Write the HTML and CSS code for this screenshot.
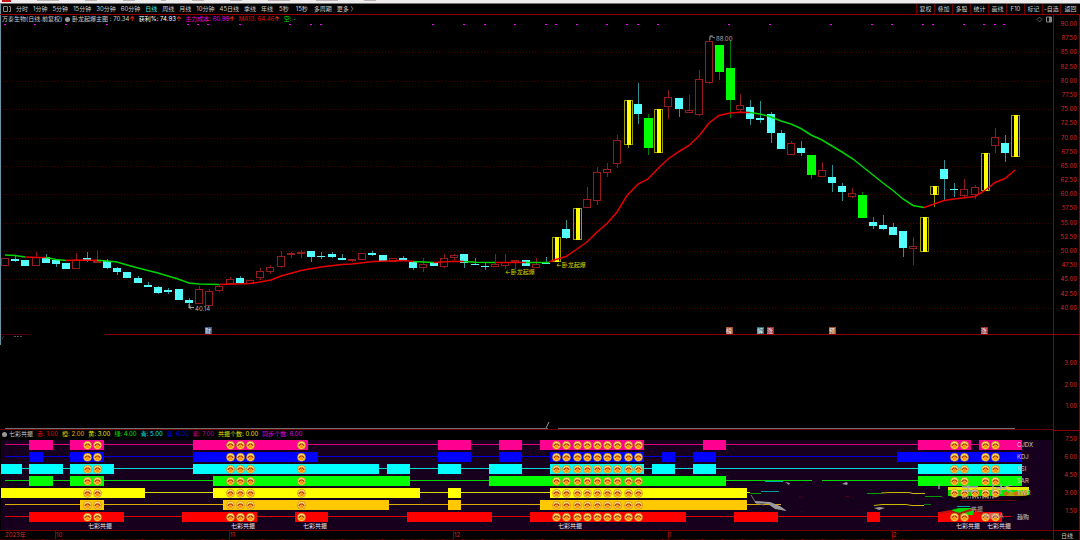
FILE: index.html
```html
<!DOCTYPE html>
<html lang="zh-CN">
<head>
<meta charset="utf-8">
<title>万泰生物 日线</title>
<link rel="stylesheet" href="styles.css">
</head>
<body>
<div class="titlebar"><span class="brand"></span><span class="crumb wide"></span><span class="crumb"></span><span class="crumb"></span><span class="crumb thin"></span><span class="crumb"></span><span class="crumb"></span><span class="crumb wide"></span><span class="crumb wide"></span><span class="crumb"></span></div>
<nav class="toolbar">
  <div class="periods">
    <button class="layout" aria-label="布局"><svg viewBox="0 0 8 6"><path d="M.5.5h4v5h-4zM6 .5h1.5v5H6" fill="none" stroke="#888"/></svg></button>
    <button>分时</button><button>1分钟</button><button>5分钟</button><button>15分钟</button><button>30分钟</button><button>60分钟</button><button class="active">日线</button><button>周线</button><button>月线</button><button>10分钟</button><button>45日线</button><button>季线</button><button>年线</button><button class="sec">5秒</button><button class="sec">15秒</button><button>多周期</button><button>更多 〉</button>
  </div>
  <div class="tools">
    <button>复权</button><button>叠加</button><button>多股</button><button>统计</button><button>画线</button><button>F10</button><button>标记</button><button>-自选</button><button>返回</button>
  </div>
</nav>
<main>
  <section class="panel">
    <div class="plot">
      <header class="info">
        <span class="name">万泰生物(日线.前复权)</span><i class="dot"></i><span class="name">卧龙起爆主图 : 70.34<b>↑</b></span>
        <span class="white gap">获利%: 74.93<b>↑</b></span><span class="magenta gap">主力成本: 60.99<b>↑</b></span><span class="red gap">MA13: 64.46<b>↑</b></span><span class="green gap">空: -</span>
        <span class="corner"><svg viewBox="0 0 16 7"><path d="M3.500 1 6 3.500 3.500 6 1 3.500z" fill="none" stroke="#777" stroke-width=".7"/><path d="M10.500 1h5v5h-5z" fill="none" stroke="#888"/><path d="M13 1h2.500v5H13z" fill="#888"/></svg></span>
      </header>
      <svg id="price" viewBox="0 23 1053 311" role="img" aria-label="K线图"></svg>
    </div>
    <div class="scale price-scale"><span>90.00</span><span>87.50</span><span>85.00</span><span>82.50</span><span>80.00</span><span>77.50</span><span>75.00</span><span>72.50</span><span>70.00</span><span>67.50</span><span>65.00</span><span>62.50</span><span>60.00</span><span>57.50</span><span>55.00</span><span>52.50</span><span>50.00</span><span>47.50</span><span>45.00</span><span>42.50</span><span>40.00</span></div>
  </section>
  <section class="panel">
    <div class="plot"><svg id="signal" viewBox="0 334 1053 96" role="img" aria-label="信号"></svg></div>
    <div class="scale signal-scale"><span>3.00</span><span>2.00</span><span>1.00</span></div>
  </section>
  <section class="panel">
    <div class="plot">
      <header class="info seven">
        <i class="dot"></i><span class="name">七彩共振</span><span class="red">赤: 1.00</span><span class="orange">橙: 2.00</span><span class="yellow">黄: 3.00</span><span class="green">绿: 4.00</span><span class="cyan">青: 5.00</span><span class="blue">蓝: 6.00</span><span class="purple">紫: 7.00</span><span class="yellow">共振个数: 0.00</span><span class="magenta">同步个数: 6.00</span>
      </header>
      <svg id="bands" viewBox="0 438 1053 92" role="img" aria-label="七彩共振"></svg>
    </div>
    <div class="scale bands-scale"><span>7.50</span><span>6.00</span><span>4.50</span><span>3.00</span><span>1.50</span></div>
  </section>
  <section class="panel dates">
    <div class="plot"><svg id="dates" viewBox="0 530 1053 10" role="img" aria-label="日期"></svg></div>
    <div class="scale period">日线</div>
  </section>
</main>
<script src="chart.js"></script>
</body>
</html>
```
FILE: styles.css
```css
* { box-sizing: border-box; }
body {
  margin: 0;
  background: linear-gradient(#6795a6, #6795a6) 0 4px / 1px 341px no-repeat #000;
  color: #ccc;
  font: 6px/8px Inter, "Noto Sans CJK SC", sans-serif;
}
button {
  border: 0;
  padding: 0;
  background: none;
  color: inherit;
  font: inherit;
  white-space: nowrap;
}
svg { display: block; width: 100%; }
.titlebar {
  display: flex;
  gap: 26px;
  height: 4px;
  padding-left: 2px;
  background: #eeecec;
  border-bottom: 1px solid #777;
}
.brand { width: 9px; height: 2px; background: #c41418; }
.crumb { width: 12px; height: 1px; background: #bbb4b4; }
.crumb.wide { width: 22px; }
.crumb.thin { width: 5px; }
.toolbar {
  display: flex;
  justify-content: space-between;
  height: 11px;
  padding-left: 3px;
  border-bottom: 1px solid #8c0000;
}
.periods { display: flex; gap: 5px; align-items: center; }
.layout { width: 8px; }
.active { color: #4fe3e3; }
.sec { padding: 0 1px; }
.tools { display: flex; }
.tools button { width: 18px; border-left: 1px solid #6e0000; }
.tools button:last-child { width: 20px; }
.panel { display: grid; grid-template-columns: 1fr 27px; }
.plot { min-width: 0; }
.info {
  display: flex;
  align-items: center;
  height: 8px;
  padding-left: 2px;
  white-space: nowrap;
}
.info b { color: #f03020; font-weight: 700; }
.dot { width: 5px; height: 5px; margin: 0 2px 0 3px; border-radius: 50%; background: #999; }
.gap { margin-left: 4px; }
.corner { width: 16px; margin-left: auto; margin-right: 1px; }
.seven { gap: 4px; }
.seven .dot { margin: 0 -2px 0 0; }
.name { color: #ccc; }
.white { color: #fff; }
.red { color: #e01010; }
.orange { color: #e8b800; }
.yellow { color: #e8e800; }
.green { color: #00e000; }
.cyan { color: #00e8e8; }
.blue { color: #0000f0; }
.purple { color: #d00080; }
.magenta { color: #e000e0; }
.scale {
  display: flex;
  flex-direction: column;
  justify-content: space-between;
  align-items: flex-end;
  padding-right: 3px;
  border-left: 1px solid #8c0000;
  box-shadow: inset -1px 0 #8c0000;
  color: #d82828;
}
.scale span { padding-left: 6px; }
.price-scale { padding-top: 5px; padding-bottom: 22px; }
.signal-scale { padding-top: 24px; padding-bottom: 20px; border-top: 1px solid #8c0000; }
.bands-scale { padding-top: 4px; padding-bottom: 15px; border-top: 1px solid #8c0000; }
.period { align-items: center; justify-content: center; padding: 0; color: #ccc; border-top: 1px solid #8c0000; }
svg text { font-family: Inter, "Noto Sans CJK SC", sans-serif; font-size: 6px; }
```
FILE: chart.js
```js
const NS = 'http://www.w3.org/2000/svg';
function add(svg, tag, attrs, text) {
  const node = document.createElementNS(NS, tag);
  for (const key in attrs) node.setAttribute(key, attrs[key]);
  if (text) node.textContent = text;
  svg.appendChild(node);
  return node;
}
const line = (s, x1, y1, x2, y2, stroke, w = 1) => add(s, 'path', { d: `M${x1} ${y1}L${x2} ${y2}`, stroke, 'stroke-width': w, fill: 'none' });
const rect = (s, x, y, width, height, fill) => add(s, 'rect', { x, y, width, height, fill });
const label = (s, x, y, fill, text) => add(s, 'text', { x, y, fill }, text);
const slot = i => Math.round(5 + i * 10.207);

const price = document.getElementById('price');
for (const y of [52, 81, 109, 138, 166, 194, 223, 251, 279, 308]) {
  add(price, 'path', { d: `M1 ${y + .5}H1053`, stroke: '#4a0000', 'stroke-dasharray': '1 2' });
}
for (const x of [5, 35, 66, 107, 188, 198, 208, 240, 290, 311, 321, 433, 464, 485, 515, 546, 556, 577, 607, 627, 638, 658, 729, 770, 831, 872, 892, 923, 933, 964, 984, 995, 1004]) {
  rect(price, x - 1, 24, 2, 1, '#f0f');
}

/* kind, body top, body bottom, high, low */
const candles = [
  ['r',258,266],['c',259,261,256,262],['c',260,266],['r',257,266,252],['c',257,263,254],['c',260,264,260,267],['c',263,269],['r',260,269,253],['c',258,260,252,262],['r',261,263,250],
  ['c',261,268,259,269],['c',268,272,267,275],['c',272,278],['c',278,283,276],['c',285,287,282],['c',287,293,286,294],['c',290,292,288,294],['c',289,300],['c',300,303,298,308],['r',289,304,286],
  ['r',291,306,289],['r',286,291,284,292],['r',279,284,277],['c',278,283,276],['r',280,284],['r',271,278,268,280],['r',267,272,265,274],['r',256,267,251,268],['r',253,255,252,258],['r',252,254,250,258],
  ['c',251,257,251,262],['c',256,257,252,259],['c',254,257,252,258],['c',258,260,254],['r',259,261,259,262],['r',253,260],['c',253,255,251,256],['c',255,261],['r',258,262],['c',258,260,256],
  ['c',262,268,262,270],['r',264,268,258,272],['c',262,266],['r',258,267,254,268],['r',255,258,254,260],['c',254,263,254,268],['c',264,265,258],['c',266,267,263,270],['r',264,267,254],['r',262,266,254,269],
  ['r',260,262,260,269],['c',260,266],['r',264,268,258],['c',263,264,257],['y',237,262],['c',229,238,220,239],['y',208,240],['r',199,208,187],['r',172,201,167,205],['r',169,173,163,177],
  ['r',140,164,135,168],['y',100,145,100,148],['c',104,114,83,124],['g',118,148,114,155],['y',109,153],['r',97,107,90,119],['c',98,109,98,117],['r',110,113,95],['r',79,115,70,116],['r',41,83,37,84],
  ['g',45,72,45,80],['g',68,100,41,118],['r',105,110,94,113],['c',107,119,100,125],['c',118,120,101,123],['c',114,133,112,143],['c',133,149,130],['r',143,155,141],['c',148,153,141,156],['g',155,175,155,179],
  ['r',170,177,162],['c',177,183,165,192],['c',186,192,183,201],['r',193,197,188,198],['g',195,218,192],['c',222,226,217,229],['c',225,229,215,230],['c',227,235,223],['c',231,248,231,257],['r',246,249,237,265],
  ['y',217,252],['y',186,195,186,207],['c',169,179,160,200],['c',189,190,183,197],['r',189,196,179,197],['r',187,195,185,199],['y',153,191],['r',137,146,128,153],['c',143,153,135,162],['y',115,157]
];
const wick = { r: '#8c1c1c', c: '#2f8f92', g: '#007c00', y: '#8f8f00' };
candles.forEach(([kind, top, bottom, high = top, low = bottom], i) => {
  const x = slot(i), h = bottom - top;
  if (high < top) rect(price, x, high, 1, top - high, wick[kind]);
  if (low > bottom) rect(price, x, bottom, 1, low - bottom, wick[kind]);
  if (kind === 'c') rect(price, x - 4, top, 8, h, '#54ffff');
  if (kind === 'g') rect(price, x - 4, top, 9, h, '#0f0');
  if (kind === 'r' || kind === 'y') {
    add(price, 'rect', { x: x - 3.5, y: top + .5, width: kind === 'y' ? 8 : 7, height: Math.max(h - 1, 1), fill: 'none', stroke: kind === 'y' ? '#9c9c00' : '#941c1c' });
  }
  if (kind === 'y') rect(price, x - 1, top, 4, h, '#ff0');
});
const average = [
  ['g','5,255 15,255.5 25,257'],['r','25,257 36,257.5 46,257.5'],['g','46,257.5 56,259.5 66,260.5'],['r','66,260.5 77,260 97,260.3'],
  ['g','97,260.3 107,261 117,262 127,265 138,268 158,273 178,279 189,283 199,284 219,284.5'],
  ['r','219,284.5 250,283.5 260,282 271,280 281,276 301,270.5 321,267 342,264.5 352,264 373,261.5 403,260.5 413,261.5'],
  ['g','413,261.5 434,262.5'],['r','434,262.5 454,261.3 464,261.5'],['g','464,261.5 475,262.3 495,262.5'],['r','495,262.5 526,262.5'],['g','526,262.5 549,262.5'],
  ['r','549,262 556,259.5 566,256.5 577,249 587,242 597,232 607,223.5 617,212 627,195.5 638,184 648,179 658,168.5 668,159 679,151.5 689,145.5 699,136 709,123 719,115.5 730,113 740,112.3 750,112.5'],
  ['g','750,112.5 760,114 770,116.5 781,121 791,124 801,128.5 811,135 822,140 842,152 853,159 883,183 893,190.5 903,199 913,205.5 924,207.5'],
  ['r','924,207.5 934,204 944,200.5 954,199 975,196.5 985,190.5 995,182.5 1005,178.5 1015,170']
];
for (const [kind, points] of average) {
  add(price, 'polyline', { points, fill: 'none', stroke: kind === 'g' ? '#00d400' : '#e80000', 'stroke-width': 1.5 });
}
label(price, 195, 311, '#b0b0b0', '40.14');
add(price, 'path', { d: 'M189 304v4M194 307.500h-5M191 305.500l-2 2 2 2', stroke: '#999', fill: 'none' });
label(price, 716, 41, '#b0b0b0', '88.00');
add(price, 'path', { d: 'M710 40v-4h3M710 36l5 2', stroke: '#888', fill: 'none' });
label(price, 505, 274, '#d8d800', '←卧龙起爆');
label(price, 556, 267, '#d8d800', '←卧龙起爆');
for (const [x, fill, text] of [[205,'#315f8c','财'],[726,'#a65324','榜'],[757,'#24707c','解'],[767,'#a02838','涨'],[829,'#a65324','预'],[981,'#a02838','涨']]) {
  rect(price, x, 327, 7, 7, fill);
  label(price, x, 333, '#f0f0f0', text);
}

const signal = document.getElementById('signal');
line(signal, 1, 334.5, 30, 334.5, '#500000');
line(signal, 105, 334.5, 1053, 334.5, '#8c0000');
add(signal, 'path', { d: 'M2 339l2-3M14 336.500h8', stroke: '#555', 'stroke-dasharray': '2 1', fill: 'none' });
line(signal, 5, 428.5, 548, 428.5, '#707070');
line(signal, 546, 428, 549, 422, '#999');
line(signal, 558, 428.5, 1015, 428.5, '#707070');
line(signal, 0, 429.5, 1053, 429.5, '#6c0000');

const bands = document.getElementById('bands');
rect(bands, 1, 440, 1051, 90, '#16001e');
const rows = [
  [445,'#ff0090',[[5,1015]],[[29,53],[70,104],[193,308],[438,471],[499,522],[540,644],[703,726],[918,971],[979,1022]]],
  [457,'#0000ff',[[5,1015]],[[29,43],[70,104],[193,318],[438,471],[499,522],[550,644],[662,675],[693,716],[897,1022]]],
  [469,'#00ffff',[[5,1015]],[[1,22],[29,63],[70,114],[193,379],[387,410],[438,461],[489,522],[550,644],[652,675],[693,716],[918,1022]]],
  [481,'#00ff00',[[5,812],[822,1015]],[[29,53],[70,104],[213,410],[489,726],[918,1022]]],
  [493,'#ffff00',[[5,750]],[[1,145],[213,420],[448,461],[550,747]]],
  [505,'#ffc800',[[5,781]],[[80,104],[223,389],[448,461],[540,747]]],
  [517,'#ff0000',[[5,1011]],[[29,124],[182,257],[295,328],[407,492],[530,686],[734,778],[867,880],[938,1002]]]
];
for (const [y, color, lines, blocks] of rows) {
  for (const [a, b] of lines) add(bands, 'path', { d: `M${a} ${y - .5}H${b}`, stroke: color, opacity: .85 });
  for (const [a, b] of blocks) rect(bands, a, y - 5, b - a, 10, color);
}

/* remnants of an earlier frame around the last bars */
const scraps = [
  ['M765 481.500h18','#00a0b0'],['M750 493.500h11','#009c00'],['M761 491.500h18','#0098a0'],['M867 493.500h14','#009c00'],['M881 493l8-.5h20l4 1h12','#c8b800'],
  ['M925 496.500h17','#009c00'],['M874 505.500l8-1h24l6 1h12','#c8b800'],['M924 504.500h7','#008000'],['M751 495l5 8 8 2','#777'],['M799 497h3M846 496.500h3M801 511.500h1M858 509.500h1','#600010']
];
for (const [d, stroke] of scraps) add(bands, 'path', { d, stroke, fill: 'none' });
add(bands, 'path', { d: 'M755 501l15 1 10 4 7 5-12-2-7-5-13-1zM785 482l5 1-1 2zM842 484l4-2 2 1-1 2zM874 508l6-1 5 1-6 2z', fill: '#999' });
rect(bands, 948, 488, 81, 8, '#00e800');
rect(bands, 948, 487, 81, 3, '#e8e800');
add(bands, 'path', { d: 'M1004 493l24-3v6h-22z', fill: '#a8a800' });
add(bands, 'path', { d: 'M945 496q42 10 84-1v4q-40 8-72 2z', fill: '#0b000e' });
add(bands, 'path', { d: 'M960 500.500h56', stroke: '#650018' });
add(bands, 'path', { d: 'M957 506.500h13', stroke: '#00a0b0' });
add(bands, 'path', { d: 'M951 510l8-2h16l-2 7h-12z', fill: '#00d800' });
add(bands, 'path', { d: 'M940 513l10-2 9 3 14-5 8 4 8 2', stroke: '#c01010', 'stroke-width': 2, fill: 'none' });

function face(x, y) {
  add(bands, 'circle', { cx: x, cy: y, r: 4, fill: '#ffe070', stroke: '#b87800', 'stroke-width': .6 });
  add(bands, 'path', { d: `M${x - 2.5} ${y + 2}l2.500-3 2.500 3q-2.500 2-5 0z`, fill: '#ff9500' });
  add(bands, 'path', { d: `M${x - 2.8} ${y + .6}L${x - 1} ${y - 1.3}H${x + 1}L${x + 2.8} ${y + .6}`, stroke: '#b02800', 'stroke-width': 1.2, fill: 'none' });
}
const early = [8, 9, 22, 23, 24, 29, 54, 55, 56, 57, 58, 59, 60, 61, 62], late = [93, 94, 96, 97];
for (const [y] of rows) {
  const shown = y === 505 ? early : early.concat(late);
  for (const i of shown) face(slot(i) + .5, y + .3);
}
face(975, 493);
for (const x of [1006, 1016, 1024]) add(bands, 'path', { d: `M${x - 3} 494l3-3 3 3-3 2z`, fill: '#d07000' });
add(bands, 'path', { d: 'M939 484v5M962 487h16M968 485v5M963 491h15M993 484v10M996 488l6-1M1001 484v10M1002 488l10-3M1003 488l9 4', stroke: '#aaa', 'stroke-width': 1.3, fill: 'none' });
add(bands, 'path', { d: 'M962 497.500h32', stroke: '#777', 'stroke-width': 2, 'stroke-dasharray': '2 1 1 1' });
label(bands, 971, 511, '#aaa', '共振');
label(bands, 982, 518, '#b8a0a0', '共振MA');
for (const [x, y, text] of [[1017,447,'CJDX'],[1017,459,'KDJ'],[1017,471,'RSI'],[1017,483,'SAR'],[1017,495,'TWR'],[1017,519,'趋购']]) label(bands, x, y, '#ccc', text);
for (const x of [88, 231, 303, 558, 956, 987]) label(bands, x, 528, '#eee', '七彩共振');

const dates = document.getElementById('dates');
line(dates, 0, 530.5, 1053, 530.5, '#6c0000');
label(dates, 5, 537, '#d82828', '2023年');
for (const [x, text] of [[55,'10'],[229,'11'],[453,'12'],[668,'1'],[892,'2']]) {
  rect(dates, x, 531, 1, 9, '#8c0000');
  label(dates, x + 1, 537, '#d82828', text);
}
rect(dates, 0, 539, 1053, 1, '#300000');
for (let x = 22; x < 1053; x += 20) rect(dates, x, 539, 1, 1, '#8c0000');
```
